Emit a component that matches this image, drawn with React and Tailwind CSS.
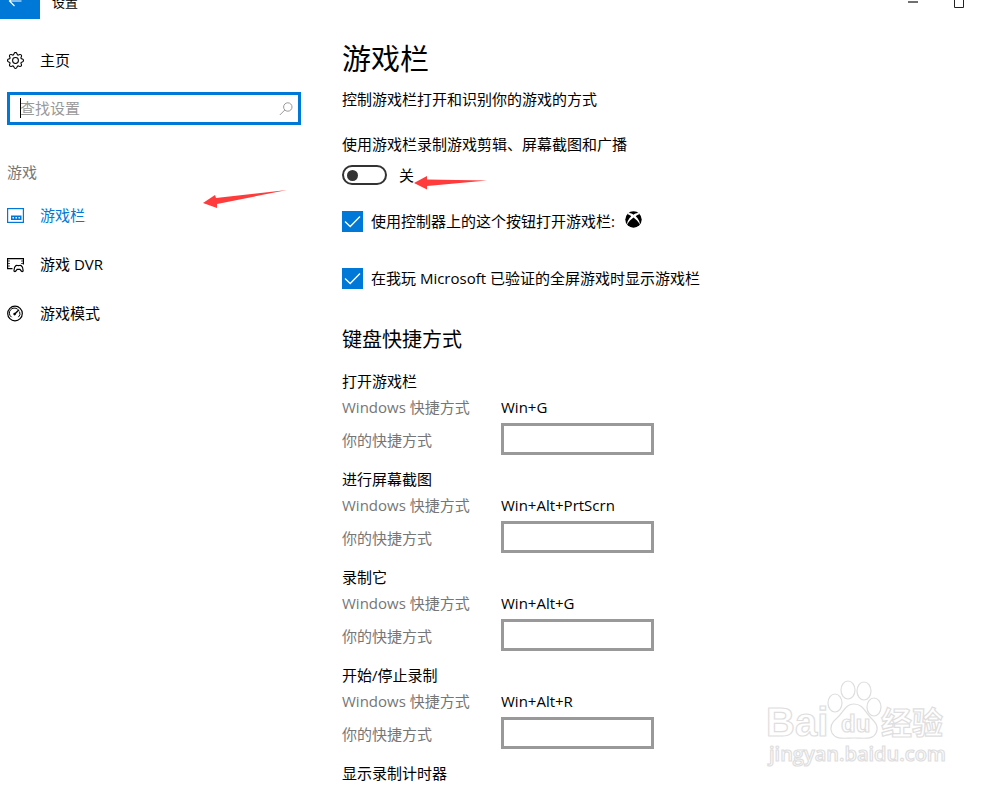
import React, { useState } from 'react';
import { BsGear } from 'react-icons/bs';

const shortcuts = [
    { id: 'open', title: '打开游戏栏', keys: 'Win+G' },
    { id: 'screenshot', title: '进行屏幕截图', keys: 'Win+Alt+PrtScrn' },
    { id: 'record', title: '录制它', keys: 'Win+Alt+G' },
    { id: 'toggle', title: '开始/停止录制', keys: 'Win+Alt+R' },
];

const GameBarIcon = () => (
    <svg width="17" height="17" viewBox="0 0 17 17" fill="none" stroke="currentColor">
        <rect x="0.6" y="1.6" width="15.8" height="13.8" strokeWidth="1.2" />
        <path d="M4 8.5h10.5v4.5H4z" fill="currentColor" stroke="none" />
        <path d="M5.5 10h1.5v1.5H5.5zM8.5 10h1.5v1.5H8.5zM11.5 10h1.5v1.5h-1.5z" fill="#fff" stroke="none" />
    </svg>
);

const DvrIcon = () => (
    <svg width="17" height="17" viewBox="0 0 17 17" fill="none" stroke="currentColor" strokeWidth="1.2">
        <path d="M5.5 12.6H.6V2.6h15.8v6" />
        <path d="M1 5h2M1 7.5h2M1 10h2M14 5h2M14 7.5h2" strokeWidth="0.7" />
        <path d="M9 9.6c1-.5 1.5 0 2.5 0s1.600-.5 2.600 0c1.400 1 2 3 2 4.800 0 1.300-1 1.500-1.800.6l-1.400-1.700h-2.800L8.800 15c-.8.9-1.800.7-1.800-.6 0-1.800.6-3.800 2-4.800z" />
    </svg>
);

const GameModeIcon = () => (
    <svg width="17" height="17" viewBox="0 0 17 17" fill="none" stroke="currentColor">
        <circle cx="8" cy="8.5" r="7.3" strokeWidth="1.2" />
        <path d="M4.6 12.2A5 5 0 1 1 10.8 4.4M12.6 6.6a5 5 0 0 1-1.2 5.6" strokeWidth="1" />
        <path d="M7.5 9.2 12 4.7" strokeWidth="1.4" />
        <circle cx="7.6" cy="9.1" r="1.3" fill="currentColor" stroke="none" />
    </svg>
);

const XboxIcon = () => (
    <svg width="17" height="17" viewBox="0 0 17 17" className="mb-1">
        <circle cx="8.5" cy="8.5" r="8.2" fill="#000" />
        <path
            d="M3 2.2C5 1.6 7 2.7 8.5 3.8 10 2.7 12 1.6 14 2.2L14.4 3.2C13.2 3.2 11.8 4.2 10.8 5.3 13 7.5 15.2 11 14.8 13.5 13.5 11 10.8 8.2 8.5 6.6 6.2 8.2 3.5 11 2.2 13.5 1.8 11 4 7.5 6.2 5.3 5.2 4.2 3.8 3.2 2.6 3.2z"
            fill="#fff"
        />
    </svg>
);

const navItems = [
    { label: '游戏栏', icon: <GameBarIcon />, active: true },
    { label: '游戏 DVR', icon: <DvrIcon /> },
    { label: '游戏模式', icon: <GameModeIcon /> },
];

const TitleBar = () => (
    <header className="flex h-[19px] items-end overflow-hidden">
        <button type="button" aria-label="返回" className="flex h-9 w-10 shrink-0 items-center bg-[#0078d7] pl-2 text-white">
            <svg width="14" height="12" viewBox="0 0 14 12" fill="none" stroke="currentColor" strokeWidth="1.2">
                <path d="M13.5 6H1.5M6.5 1 1.5 6l5 5" />
            </svg>
        </button>
        <span className="ml-3 h-[33px] text-[13px] leading-8">设置</span>
        <div className="ml-auto flex h-[34px] items-center gap-9 pr-9">
            <button type="button" aria-label="最小化">
                <svg width="10" height="10" viewBox="0 0 10 10">
                    <path d="M0 5h10" stroke="#333" strokeWidth="1.4" />
                </svg>
            </button>
            <button type="button" aria-label="最大化">
                <svg width="10" height="11" viewBox="0 0 10 11" fill="none">
                    <path d="M.5.5h9v10h-9z" stroke="#222" />
                </svg>
            </button>
        </div>
    </header>
);

const Sidebar = () => (
    <aside className="w-[301px] shrink-0 pl-[7px] pt-[29px]">
        <a href="#home" className="flex h-6 items-center gap-4">
            <BsGear size={17} /> 主页
        </a>

        <div className="relative mt-5">
            <input
                type="text"
                aria-label="查找设置"
                placeholder="查找设置"
                className="block h-[33px] w-full border-[3px] border-[#0078d7] pb-0.5 pl-2.5 pr-8 outline-none placeholder:text-[#999]"
            />
            {/* curseur de saisie */}
            <span className="absolute left-[13px] top-1.5 h-5 w-px bg-black" />
            <svg className="absolute right-2 top-2.5" width="14" height="14" viewBox="0 0 14 14" fill="none" stroke="#999">
                <circle cx="8.8" cy="5" r="4.2" />
                <path d="M5.8 8 .8 13" />
            </svg>
        </div>

        <h2 className="mt-[35px] leading-6 text-[#767676]">游戏</h2>
        <nav className="mt-[7px]">
            {navItems.map((item) => (
                <a
                    key={item.label}
                    href="#games"
                    className={item.active ? 'flex h-[49px] items-center gap-4 text-[#0078d7]' : 'flex h-[49px] items-center gap-4'}
                >
                    {item.icon} {item.label}
                </a>
            ))}
        </nav>
    </aside>
);

const CheckRow = ({ id, children }) => {
    const [checked, setChecked] = useState(true);

    return (
        <div className="flex h-6 items-center gap-2">
            <span className="grid shrink-0 place-items-center">
                <input
                    type="checkbox"
                    id={id}
                    checked={checked}
                    onChange={(e) => setChecked(e.target.checked)}
                    className="col-start-1 row-start-1 size-[21px] appearance-none border border-[#0078d7] checked:bg-[#0078d7]"
                />
                {checked && (
                    <svg className="pointer-events-none col-start-1 row-start-1" width="17" height="13" viewBox="0 0 17 13" fill="none" stroke="#fff" strokeWidth="1.3">
                        <path d="M1 6.5 6.2 11.5 16 1.5" />
                    </svg>
                )}
            </span>
            <label htmlFor={id} className="flex items-center gap-2.5">{children}</label>
        </div>
    );
};

const ShortcutGroup = ({ id, title, keys }) => (
    <section className="mb-3">
        <h3 className="leading-6">{title}</h3>
        <div className="mt-0.5 flex leading-6">
            <span className="w-[159px] text-[#767676]">Windows 快捷方式</span>
            <span>{keys}</span>
        </div>
        <div className="mt-1 flex items-center">
            <label htmlFor={id} className="w-[159px] pt-0.5 leading-6 text-[#767676]">你的快捷方式</label>
            <input type="text" id={id} className="h-8 w-[153px] border-[3px] border-[#999] px-2 outline-none" />
        </div>
    </section>
);

const Watermark = () => (
    <svg
        className="pointer-events-none absolute bottom-4 right-[46px]"
        width="190"
        height="94"
        viewBox="0 0 190 94"
        fill="#fff"
        stroke="#dedede"
        strokeWidth="1.2"
    >
        <text x="2" y="58" fontSize="40" fontWeight="700" fontFamily="'Liberation Sans', sans-serif">Bai</text>
        <ellipse cx="71" cy="25" rx="7" ry="9" />
        <ellipse cx="84" cy="12" rx="7" ry="9" />
        <ellipse cx="100" cy="13" rx="7" ry="9" />
        <ellipse cx="110" cy="29" rx="7" ry="9" />
        <path d="M90 26c9 0 11 8 17 14 5 5 8 9 5 15-3 7-12 5-22 5s-18 2-22-5c-3-6 0-11 5-15 7-6 8-14 17-14z" />
        <text x="77" y="54" fontSize="24" fontWeight="700" fontFamily="'Liberation Sans', sans-serif">du</text>
        <text x="117" y="56" fontSize="31" fontWeight="700" fontFamily="'Noto Sans CJK SC', sans-serif">经验</text>
        <text x="5" y="83" fontSize="20" fontWeight="600" fontFamily="'Open Sans', sans-serif">jingyan.baidu.com</text>
    </svg>
);

const App = () => {
    const [recording, setRecording] = useState(false);

    return (
        <div className="relative h-screen overflow-hidden bg-white font-['Open_Sans','Noto_Sans_CJK_SC',sans-serif] text-[15px] text-black">
            <TitleBar />
            <div className="flex">
                <Sidebar />

                <main className="min-w-0 flex-1 pl-[41px] pt-5">
                    <h1 className="text-[29px] leading-10">游戏栏</h1>
                    <p className="mt-2 leading-6">控制游戏栏打开和识别你的游戏的方式</p>

                    <label htmlFor="record-switch" className="mt-[21px] block leading-6">使用游戏栏录制游戏剪辑、屏幕截图和广播</label>
                    <div className="mt-[7px] flex h-6 items-center gap-3">
                        <input
                            type="checkbox"
                            role="switch"
                            id="record-switch"
                            checked={recording}
                            onChange={(e) => setRecording(e.target.checked)}
                            className="flex h-5 w-[45px] appearance-none items-center rounded-full border-2 border-[#333] px-[3px] before:size-[11px] before:rounded-full before:bg-[#333] checked:justify-end"
                        />
                        <span>{recording ? '开' : '关'}</span>
                    </div>

                    <div className="mt-[22px] flex flex-col gap-[33px]">
                        <CheckRow id="controller">
                            使用控制器上的这个按钮打开游戏栏: <XboxIcon />
                        </CheckRow>
                        <CheckRow id="fullscreen">在我玩 Microsoft 已验证的全屏游戏时显示游戏栏</CheckRow>
                    </div>

                    <h2 className="mb-[13px] mt-[34px] text-[20px] leading-8">键盘快捷方式</h2>
                    {shortcuts.map((item) => (
                        <ShortcutGroup key={item.id} {...item} />
                    ))}
                    <h3 className="leading-6">显示录制计时器</h3>
                </main>
            </div>

            {/* flèches rouges */}
            <svg className="pointer-events-none absolute left-[203px] top-[189px]" width="86" height="20" viewBox="0 0 86 20" fill="#ff3b3b">
                <path d="M0 14 12 6l1 3L84 1 14 15v4z" />
            </svg>
            <svg className="pointer-events-none absolute left-[414px] top-[176px]" width="74" height="14" viewBox="0 0 74 14" fill="#ff3b3b">
                <path d="M0 7 13 0v3.5L73 4.5 13 10v3.5z" />
            </svg>
            <Watermark />
        </div>
    );
};

export default App;
